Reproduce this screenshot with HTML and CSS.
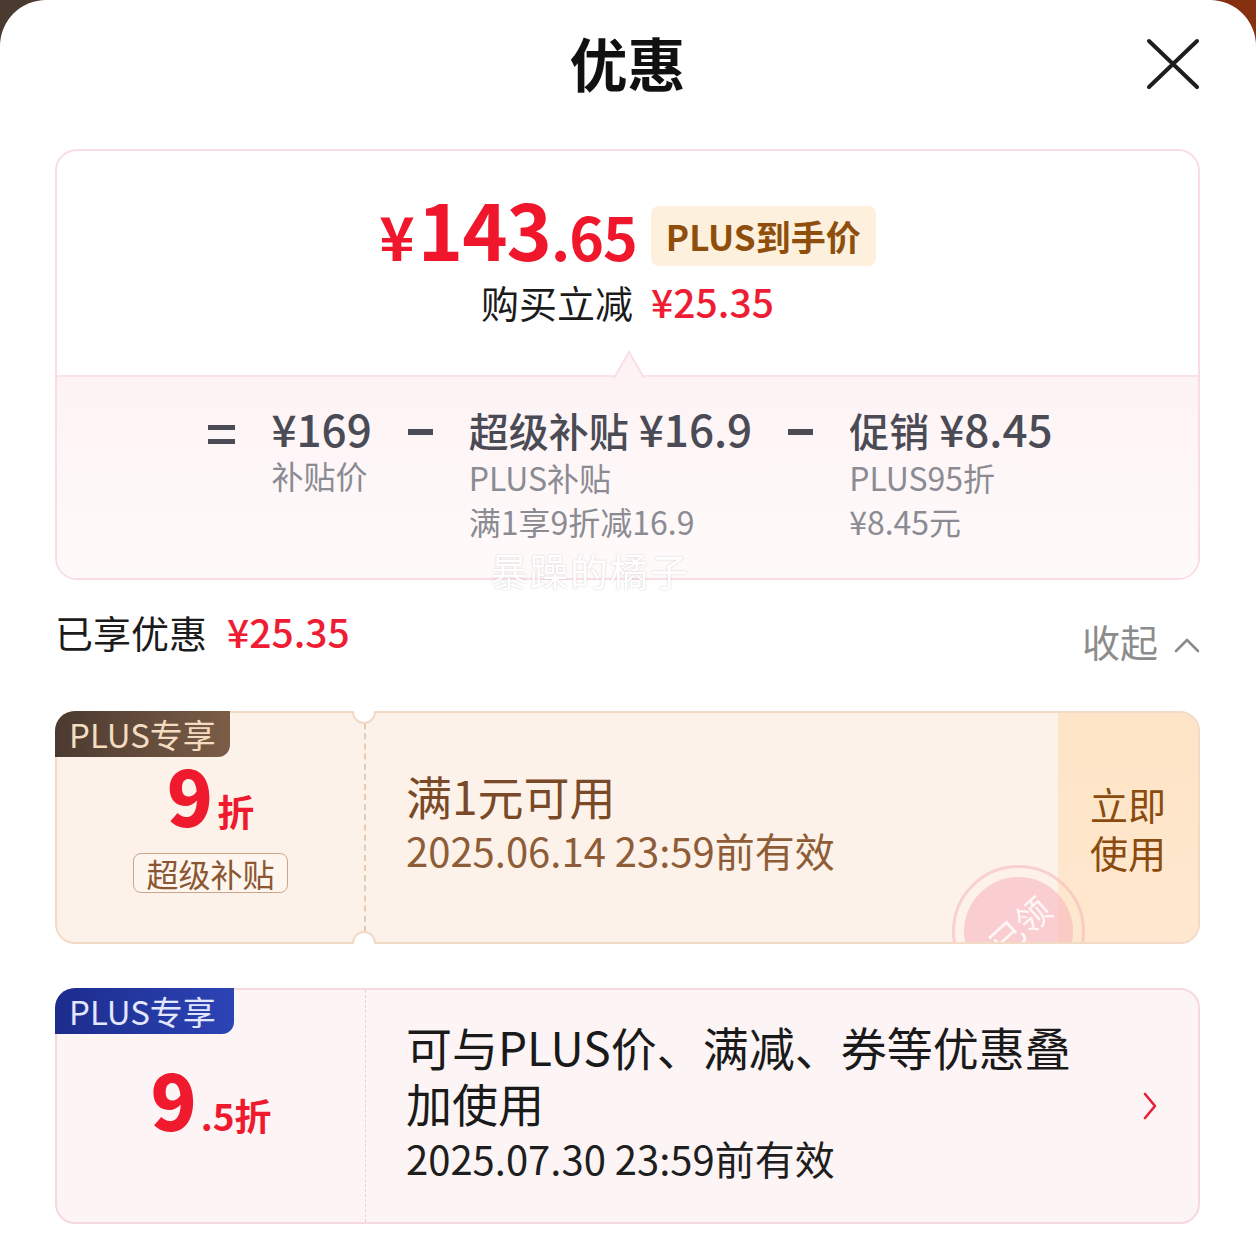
FILE: index.html
```html
<!DOCTYPE html>
<html lang="zh-CN">
<head>
<meta charset="utf-8">
<title>优惠</title>
<link rel="stylesheet" href="styles.css">
</head>
<body>
<div class="sheet">
  <header class="head">
    <span class="head-side"></span>
    <h1 class="title">优惠</h1>
    <button class="close" aria-label="关闭">
      <svg width="54" height="52" viewBox="0 0 54 52"><path d="M3 3 L51 49 M51 3 L3 49" stroke="#1e1e1e" stroke-width="4" stroke-linecap="round" fill="none"/></svg>
    </button>
  </header>

  <section class="summary">
    <div class="sum-top">
      <div class="price-line">
        <span class="price"><span class="p-yen">¥</span><span class="p-int">143</span><span class="p-dec">.65</span></span>
        <span class="plus-tag">PLUS到手价</span>
      </div>
      <div class="save">购买立减<span class="save-amt">¥25.35</span></div>
    </div>
    <div class="sum-bottom">
      <svg class="pointer" width="32" height="28" viewBox="0 0 32 28"><path d="M1 28 L16 2 L31 28" fill="#fdf3f5" stroke="#f9dfe4" stroke-width="2"/></svg>
      <div class="calc">
        <span class="eq"></span>
        <div class="term">
          <div class="term-val">¥169</div>
          <div class="term-sub">补贴价</div>
        </div>
        <span class="minus"></span>
        <div class="term">
          <div class="term-val"><span class="term-label">超级补贴</span>¥16.9</div>
          <div class="term-sub">PLUS补贴</div>
          <div class="term-sub">满1享9折减16.9</div>
        </div>
        <span class="minus"></span>
        <div class="term">
          <div class="term-val"><span class="term-label">促销</span>¥8.45</div>
          <div class="term-sub">PLUS95折</div>
          <div class="term-sub">¥8.45元</div>
        </div>
      </div>
    </div>
    <div class="watermark">暴躁的橘子</div>
  </section>

  <div class="enjoyed">
    <div class="enjoyed-l">已享优惠<span class="enjoyed-amt">¥25.35</span></div>
    <div class="collapse">收起<svg width="26" height="18" viewBox="0 0 26 18"><path d="M2 15 L13 4 L24 15" stroke="#8c8c8c" stroke-width="2.6" fill="none" stroke-linecap="round" stroke-linejoin="round"/></svg></div>
  </div>

  <div class="coupon c-gold">
    <div class="cp-left cp-left-gold">
      <span class="cp-badge badge-brown">PLUS专享</span>
      <div class="disc"><span class="disc-big">9</span><span class="disc-small">折</span></div>
      <span class="cp-tag">超级补贴</span>
    </div>
    <div class="cp-main cp-main-gold">
      <div class="cp-title gold-title">满1元可用</div>
      <div class="cp-date gold-date">2025.06.14 23:59前有效</div>
    </div>
    <div class="cp-action">立即<br>使用</div>
    <div class="stamp-clip">
      <div class="stamp"><div class="stamp-disc"><span class="stamp-text">已领</span></div></div>
    </div>
    <span class="notch notch-top"></span>
    <span class="notch notch-bottom"></span>
  </div>

  <div class="coupon c-pink">
    <div class="cp-left cp-left-pink">
      <span class="cp-badge badge-blue">PLUS专享</span>
      <div class="disc"><span class="disc-big">9</span><span class="disc-small">.5折</span></div>
    </div>
    <div class="cp-main cp-main-pink">
      <div class="cp-title pink-title">可与PLUS价、满减、券等优惠叠加使用</div>
      <div class="cp-date pink-date">2025.07.30 23:59前有效</div>
    </div>
    <div class="cp-arrow">
      <svg width="18" height="30" viewBox="0 0 18 30"><path d="M4 3 L14 15 L4 27" stroke="#e8203a" stroke-width="2.6" fill="none" stroke-linecap="round" stroke-linejoin="round"/></svg>
    </div>
  </div>
</div>
</body>
</html>
```

FILE: styles.css
```css
html, body {
  margin: 0;
  padding: 0;
}

body {
  background: linear-gradient(90deg, #4a3a30 0%, #5e3a26 50%, #86300f 100%);
  font-family: "Noto Sans CJK SC", "Noto Sans", sans-serif;
  color: #1b1b1b;
}

.sheet {
  width: 1256px;
  min-height: 1242px;
  box-sizing: border-box;
  background: #fff;
  border-radius: 46px 46px 0 0;
  padding: 0 56px 0 55px;
}

/* header */
.head {
  height: 130px;
  display: grid;
  grid-template-columns: 1fr auto 1fr;
  align-items: center;
}

.title {
  margin: 0 0 6px;
  font-size: 58px;
  font-weight: 700;
  line-height: 64px;
  color: #111;
}

.close {
  justify-self: end;
  width: 54px;
  height: 52px;
  padding: 0;
  border: 0;
  background: none;
  display: flex;
  margin-bottom: 2px;
}

/* summary card */
.summary {
  position: relative;
  margin-top: 19px;
  border: 2px solid #f9dde3;
  border-radius: 22px;
  background: #fff;
}

.sum-top {
  height: 224px;
  box-sizing: border-box;
  padding-top: 37px;
  display: flex;
  flex-direction: column;
  align-items: center;
}

.price-line {
  height: 80px;
  display: flex;
  align-items: flex-start;
  gap: 14px;
}

.price {
  color: #f0172c;
  font-weight: 700;
  line-height: 80px;
  font-size: 76px;
  letter-spacing: -1px;
}

.p-yen {
  font-size: 60px;
  margin-right: 4px;
}

.p-int {
  font-size: 77px;
}

.p-dec {
  font-size: 59px;
}

.plus-tag {
  margin-top: 18px;
  height: 60px;
  line-height: 60px;
  padding: 0 15px;
  border-radius: 8px;
  background: #fdf0dc;
  color: #8e4f0d;
  font-size: 35px;
  font-weight: 700;
}

.save {
  margin-top: 8px;
  font-size: 38px;
  line-height: 50px;
  color: #1b1b1b;
}

.save-amt {
  margin-left: 18px;
  font-size: 39px;
  color: #ee1d33;
  font-weight: 500;
}

.sum-bottom {
  position: relative;
  height: 203px;
  box-sizing: border-box;
  border-top: 2px solid #f9e3e7;
  border-radius: 0 0 20px 20px;
  background: linear-gradient(180deg, #fdf3f5 0%, #fffafa 100%);
  padding-top: 26px;
}

.pointer {
  position: absolute;
  left: 556px;
  top: -27px;
}

.calc {
  display: flex;
  justify-content: center;
  align-items: flex-start;
  gap: 36px;
  padding-left: 6px;
}

.eq {
  width: 27px;
  height: 9px;
  margin-top: 22px;
  border-top: 5px solid #4a4b55;
  border-bottom: 5px solid #4a4b55;
}

.minus {
  width: 25px;
  height: 6px;
  margin-top: 26px;
  background: #4a4b55;
}

.term-val {
  font-size: 44px;
  line-height: 50px;
  font-weight: 500;
  color: #4a4b55;
  white-space: nowrap;
}

.term-label {
  font-size: 40px;
  margin-right: 10px;
}

.term-sub {
  font-size: 32px;
  line-height: 44px;
  color: #8b8b93;
  white-space: nowrap;
}

.term-sub:first-of-type {
  margin-top: -3px;
}

.watermark {
  position: absolute;
  left: 433px;
  top: 399px;
  font-size: 38px;
  line-height: 40px;
  letter-spacing: 2px;
  color: #ffffff;
  text-shadow: 0 0 2px rgba(120, 110, 110, 0.35);
}

/* enjoyed row */
.enjoyed {
  margin-top: 26px;
  display: flex;
  justify-content: space-between;
  align-items: flex-start;
}

.enjoyed-l {
  font-size: 38px;
  line-height: 50px;
  color: #1b1b1b;
}

.enjoyed-amt {
  margin-left: 20px;
  font-size: 39px;
  color: #ee1d33;
  font-weight: 500;
}

.collapse {
  margin-top: 10px;
  font-size: 38px;
  line-height: 50px;
  color: #8c8c8c;
  display: flex;
  align-items: center;
  gap: 16px;
}

.collapse svg {
  margin-top: 8px;
}

/* coupons */
.coupon {
  position: relative;
  display: flex;
  box-sizing: border-box;
  border: 2px solid;
  border-radius: 20px;
}

.c-gold {
  margin-top: 45px;
  height: 233px;
  background: #fcf2ea;
  border-color: #f1dac6;
}

.c-pink {
  margin-top: 44px;
  height: 236px;
  background: #fdf4f5;
  border-color: #f5d9de;
}

.cp-left {
  width: 309px;
  flex: none;
  box-sizing: border-box;
  display: flex;
  flex-direction: column;
  align-items: center;
  justify-content: center;
}

.cp-left-gold {
  border-right: 2px dashed #e6cbb4;
  padding-bottom: 4px;
}

.cp-left-pink {
  border-right: 1.5px dashed #f0d0d6;
  padding-bottom: 14px;
}

.cp-badge {
  position: absolute;
  top: -2px;
  left: -2px;
  height: 46px;
  line-height: 46px;
  padding: 0 14px;
  font-size: 33px;
  border-radius: 20px 0 12px 0;
}

.badge-brown {
  background: linear-gradient(90deg, #4b3a30 0%, #7b5d47 100%);
  color: #f3dcc0;
}

.badge-blue {
  width: 151px;
  background: linear-gradient(90deg, #1b2c8c 0%, #2d44b6 100%);
  color: #e3e6ff;
}

.disc {
  display: flex;
  align-items: baseline;
  line-height: 70px;
  color: #ef1a2e;
  font-weight: 700;
}

.disc-big {
  font-size: 76px;
  font-weight: 900;
  margin-right: 4px;
}

.disc-small {
  font-size: 37px;
  line-height: 40px;
}

.cp-tag {
  margin-top: 22px;
  height: 38px;
  line-height: 38px;
  padding: 0 12px;
  border: 1.5px solid #c9a68c;
  border-radius: 8px;
  background: #fdf5ee;
  color: #8a5732;
  font-size: 32px;
}

.cp-main {
  flex: 1;
  padding-left: 40px;
  display: flex;
  flex-direction: column;
  justify-content: center;
}

.cp-main-gold {
  padding-bottom: 12px;
}

.cp-main-pink {
  padding-bottom: 8px;
}

.cp-title {
  font-size: 46px;
  line-height: 56px;
}

.cp-date {
  font-size: 40px;
  line-height: 54px;
}

.gold-title {
  color: #7a4927;
}

.gold-date {
  color: #8e5d37;
}

.pink-title {
  width: 692px;
  color: #1a1a1a;
}

.pink-date {
  line-height: 56px;
  color: #1e1e1e;
}

.cp-action {
  width: 140px;
  flex: none;
  background: linear-gradient(180deg, #fee4c6 0%, #fee8cf 100%);
  border-radius: 0 18px 18px 0;
  display: flex;
  align-items: center;
  justify-content: center;
  text-align: center;
  font-size: 38px;
  line-height: 48px;
  color: #8b4b0f;
}

.cp-arrow {
  width: 104px;
  flex: none;
  display: flex;
  align-items: center;
  justify-content: center;
}

.stamp-clip {
  position: absolute;
  inset: 0;
  overflow: hidden;
  border-radius: 18px;
  pointer-events: none;
}

.stamp {
  position: absolute;
  left: 895px;
  top: 152px;
  width: 127px;
  height: 127px;
  border: 3px solid rgba(246, 180, 188, 0.55);
  border-radius: 50%;
  display: flex;
  align-items: center;
  justify-content: center;
}

.stamp-disc {
  width: 109px;
  height: 109px;
  border-radius: 50%;
  background: rgba(248, 176, 186, 0.55);
  display: flex;
  align-items: center;
  justify-content: center;
}

.stamp-text {
  display: block;
  transform: rotate(-42deg);
  font-size: 34px;
  color: rgba(255, 255, 255, 0.85);
  margin-top: -12px;
}

.notch {
  position: absolute;
  left: 295px;
  width: 20px;
  height: 11px;
  background: #fff;
  border: 2px solid #f1dac6;
}

.notch-top {
  top: -2px;
  border-top: 0;
  border-radius: 0 0 14px 14px;
}

.notch-bottom {
  bottom: -2px;
  border-bottom: 0;
  border-radius: 14px 14px 0 0;
}
```
